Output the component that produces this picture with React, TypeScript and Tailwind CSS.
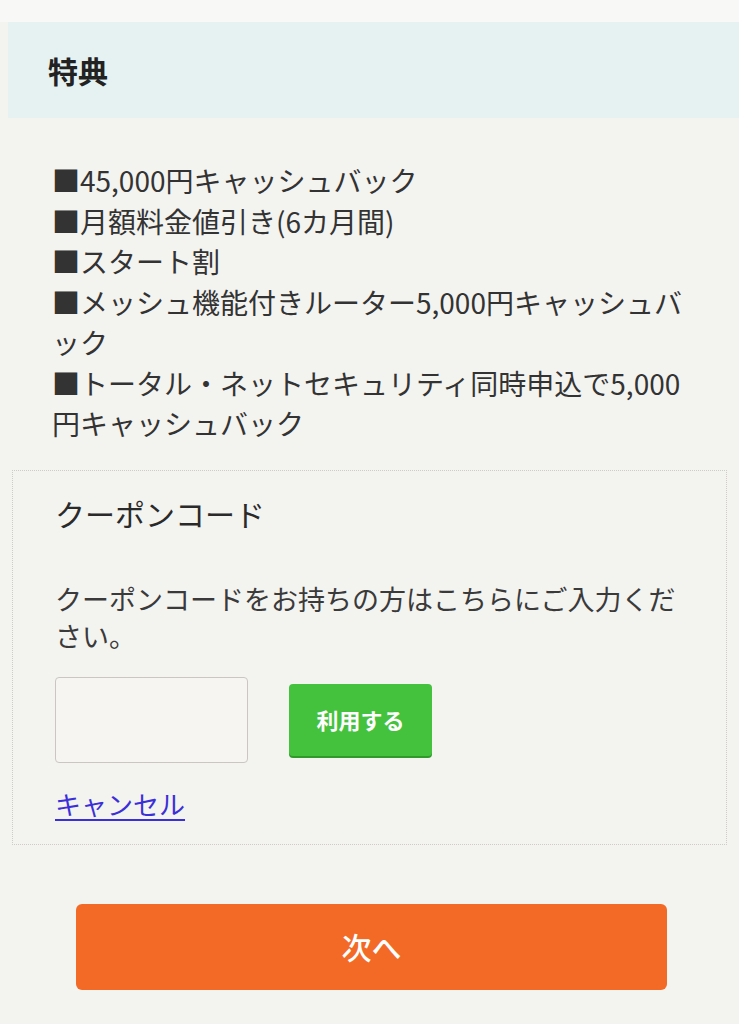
const jp = "font-['Hiragino_Sans','Noto_Sans_CJK_JP',sans-serif]";

const perks = [
  "■45,000円キャッシュバック",
  "■月額料金値引き(6カ月間)",
  "■スタート割",
  "■メッシュ機能付きルーター5,000円キャッシュバック",
  "■トータル・ネットセキュリティ同時申込で5,000円キャッシュバック",
];

export default function App() {
  return (
    <div className={`${jp} min-h-[1024px] w-[739px] bg-[#f3f3f0] text-[#333]`}>
      <div className="h-[22px] bg-[#f8f8f6]" />

      {/* Section header */}
      <div className="ml-2 flex h-[96px] items-center bg-[#e5f2f1] pl-10">
        <h2 className="text-[30px] font-bold text-[#222]">特典</h2>
      </div>

      {/* Perk list */}
      <ul className="mt-[42px] ml-[52px] w-[642px] text-[28px] leading-[40.5px]">
        {perks.map((p) => (
          <li key={p}>{p}</li>
        ))}
      </ul>

      {/* Coupon box */}
      <div className="mx-3 mt-[26px] border border-dotted border-[#cfcbc6] px-[42px] pt-[22px] pb-[21px]">
        <h3 className="text-[30px] leading-[40px] text-[#2a2a2a]">クーポンコード</h3>
        <p className="mt-[47px] text-[27px] leading-[37.5px] text-[#3a3a3a]">
          クーポンコードをお持ちの方はこちらにご入力ください。
        </p>
        <div className="mt-[22px] flex items-center gap-[41px]">
          <input
            type="text"
            className="h-[86px] w-[193px] rounded-[4px] border border-[#cbc6c1] bg-[#f6f5f2]"
          />
          <button
            type="button"
            className="h-[72px] w-[143px] rounded-[4px] bg-[#45c23d] text-[22px] font-bold text-white shadow-[0_2px_0_#2f9a2a]"
          >
            利用する
          </button>
        </div>
        <a href="#" className="mt-[22px] block w-fit text-[26px] leading-[38px] text-[#3b2fd8] underline underline-offset-4">
          キャンセル
        </a>
      </div>

      {/* Next */}
      <div className="mt-[59px] flex justify-center pl-1">
        <button
          type="button"
          className="h-[86px] w-[591px] rounded-[6px] bg-[#f26a26] text-[30px] font-medium text-white"
        >
          次へ
        </button>
      </div>
    </div>
  );
}
